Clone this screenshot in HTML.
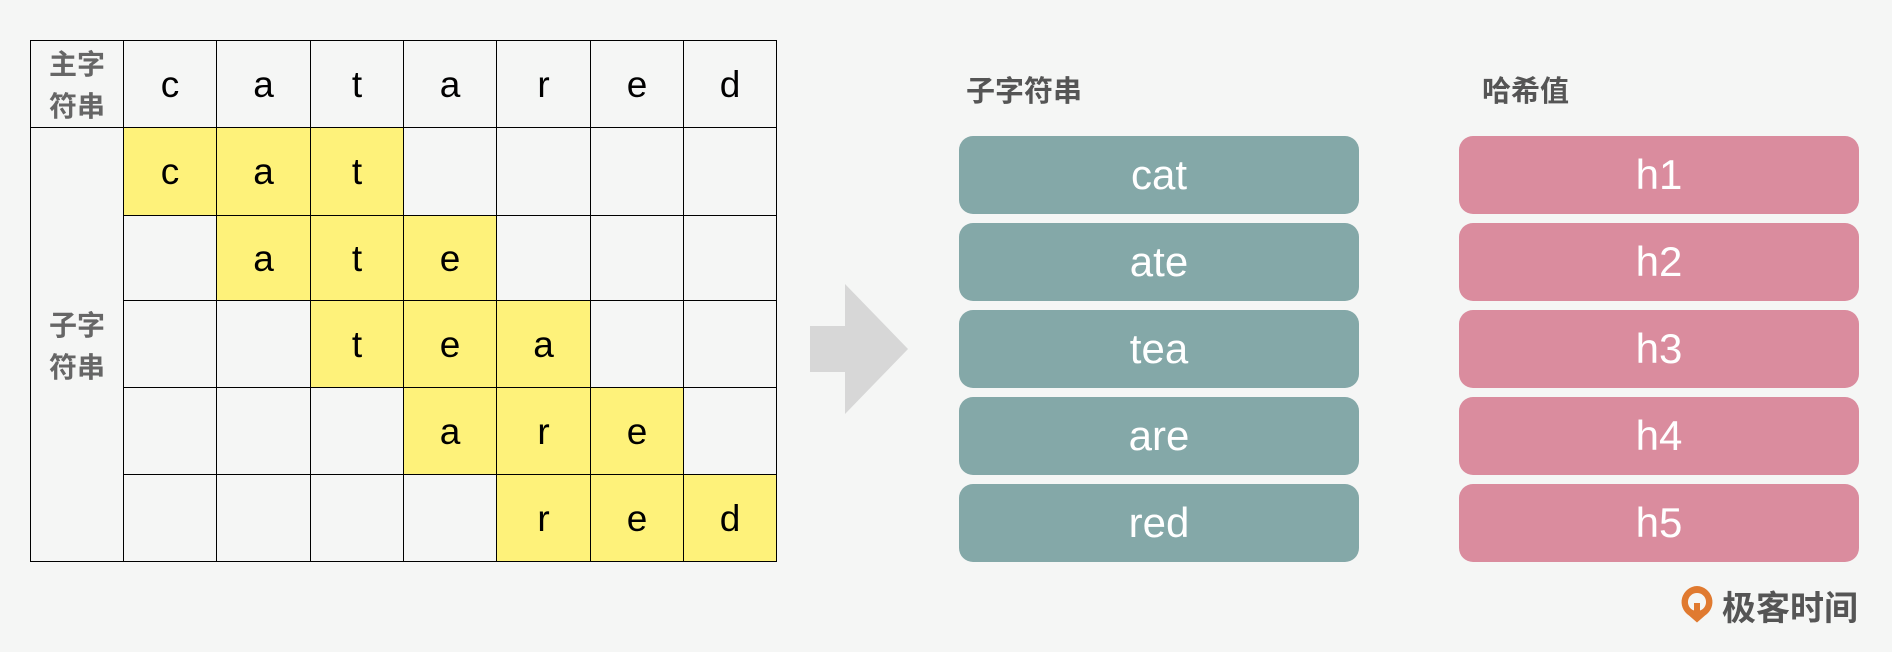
<!DOCTYPE html>
<html><head><meta charset="utf-8"><style>
body{margin:0;width:1892px;height:652px;background:#f5f6f5;position:relative;overflow:hidden;font-family:"Liberation Sans","Noto Sans CJK SC",sans-serif}
table{position:absolute;left:30px;top:40px;border-collapse:collapse;table-layout:fixed}
td{border:1.5px solid #000;padding:0;text-align:center;font-size:37px;color:#000;line-height:1}
td.y{background:#fef27a}
.lab{color:#666;font-size:28px;line-height:42px;font-weight:bold;font-family:"Noto Sans CJK SC",sans-serif}
.box{position:absolute;width:400px;height:78px;border-radius:14px;color:#fff;font-size:42px;text-align:center;line-height:78px}
.t{left:959px;background:#84a8a8}
.p{left:1459px;background:#da8c9e}
.h{position:absolute;top:70px;font-size:29px;color:#555;font-weight:bold;font-family:"Noto Sans CJK SC",sans-serif;line-height:38px}
</style></head><body>
<table>
<colgroup><col style="width:93px"><col style="width:93px"><col style="width:94px"><col style="width:93px"><col style="width:93px"><col style="width:94px"><col style="width:93px"><col style="width:93px"></colgroup>
<tr style="height:87px"><td class="lab">主字<br>符串</td><td>c</td><td>a</td><td>t</td><td>a</td><td>r</td><td>e</td><td>d</td></tr>
<tr style="height:88px"><td rowspan="5" class="lab">子字<br>符串</td><td class="y">c</td><td class="y">a</td><td class="y">t</td><td></td><td></td><td></td><td></td></tr>
<tr style="height:85px"><td></td><td class="y">a</td><td class="y">t</td><td class="y">e</td><td></td><td></td><td></td></tr>
<tr style="height:87px"><td></td><td></td><td class="y">t</td><td class="y">e</td><td class="y">a</td><td></td><td></td></tr>
<tr style="height:87px"><td></td><td></td><td></td><td class="y">a</td><td class="y">r</td><td class="y">e</td><td></td></tr>
<tr style="height:87px"><td></td><td></td><td></td><td></td><td class="y">r</td><td class="y">e</td><td class="y">d</td></tr>
</table>
<svg style="position:absolute;left:0;top:0" width="1892" height="652"><polygon points="810,326 845,326 845,284 908,349 845,414 845,372 810,372" fill="#d7d7d7"/></svg>
<div class="h" style="left:966px">子字符串</div>
<div class="h" style="left:1482px">哈希值</div>
<div class="box t" style="top:136px">cat</div>
<div class="box t" style="top:223px">ate</div>
<div class="box t" style="top:310px">tea</div>
<div class="box t" style="top:397px">are</div>
<div class="box t" style="top:484px">red</div>
<div class="box p" style="top:136px">h1</div>
<div class="box p" style="top:223px">h2</div>
<div class="box p" style="top:310px">h3</div>
<div class="box p" style="top:397px">h4</div>
<div class="box p" style="top:484px">h5</div>
<svg style="position:absolute;left:1675px;top:584px" width="44" height="40" viewBox="0 0 44 40"><path d="M22 2a16 16 0 0 0-8 29.5l8 7 8-7A16 16 0 0 0 22 2zm0 7a9 9 0 0 1 3 17.5V19h-6v7.5A9 9 0 0 1 22 9z" fill="#e07a30"/></svg>
<div style="position:absolute;left:1722px;top:586px;font-size:34px;color:#555;font-weight:bold;font-family:'Noto Sans CJK SC',sans-serif;line-height:40px">极客时间</div>
</body></html>
